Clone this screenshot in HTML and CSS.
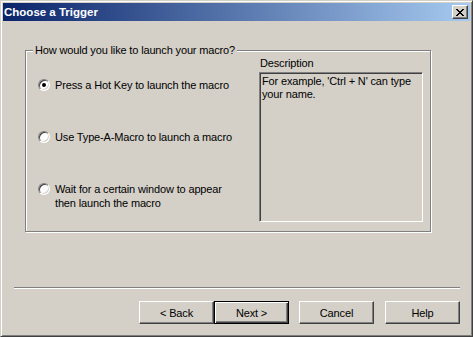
FILE: index.html
```html
<!DOCTYPE html>
<html lang="en">
<head>
    <meta charset="UTF-8">
    <title>Choose a Trigger</title>
    <link rel="stylesheet" href="styles.css">
</head>
<body>
    <div class="window">
        <div class="titlebar">
            <span class="title">Choose a Trigger</span>
            <span class="close">
                <svg width="8" height="7" viewBox="0 0 8 7" shape-rendering="crispEdges">
                    <rect x="0" y="0" width="2" height="1"/><rect x="6" y="0" width="2" height="1"/>
                    <rect x="1" y="1" width="2" height="1"/><rect x="5" y="1" width="2" height="1"/>
                    <rect x="2" y="2" width="4" height="1"/>
                    <rect x="3" y="3" width="2" height="1"/>
                    <rect x="2" y="4" width="4" height="1"/>
                    <rect x="1" y="5" width="2" height="1"/><rect x="5" y="5" width="2" height="1"/>
                    <rect x="0" y="6" width="2" height="1"/><rect x="6" y="6" width="2" height="1"/>
                </svg>
            </span>
        </div>
        <div class="panel">
            <div class="group">
                <span class="group-label">How would you like to launch your macro?</span>
                <div class="options">
                    <div class="option">
                        <span class="radio checked"></span>
                        <span class="option-text">Press a Hot Key to launch the macro</span>
                    </div>
                    <div class="option">
                        <span class="radio"></span>
                        <span class="option-text">Use Type-A-Macro to launch a macro</span>
                    </div>
                    <div class="option">
                        <span class="radio"></span>
                        <span class="option-text">Wait for a certain window to appear<br>then launch the macro</span>
                    </div>
                </div>
                <div class="desc">
                    <div class="desc-label">Description</div>
                    <div class="desc-box">For example, 'Ctrl + N' can type<br>your name.</div>
                </div>
            </div>
            <div class="separator"></div>
            <div class="buttons">
                <button class="btn">&lt; Back</button>
                <button class="btn default">Next &gt;</button>
                <button class="btn cancel">Cancel</button>
                <button class="btn help">Help</button>
            </div>
        </div>
    </div>
</body>
</html>
```

FILE: styles.css
```css
body {
    margin: 0;
    background: #d4d0c8;
    font-family: "Liberation Sans", Arial, sans-serif;
    font-size: 11px;
    letter-spacing: -0.15px;
    color: #000;
}
.window {
    width: 473px;
    height: 337px;
    box-sizing: border-box;
    border: 1px solid;
    border-color: #d4d0c8 #404040 #404040 #d4d0c8;
    box-shadow: inset 1px 1px #fff, inset -1px -1px #808080;
    padding: 2px;
    background: #d4d0c8;
    display: flex;
    flex-direction: column;
}
.titlebar {
    height: 18px;
    flex-shrink: 0;
    background: linear-gradient(to right, #0a246a, #a6caf0);
    display: flex;
    align-items: center;
    justify-content: space-between;
    padding: 0 2px 0 1px;
}
.title {
    color: #fff;
    font-weight: bold;
    font-size: 11.5px;
    letter-spacing: 0;
}
.close {
    width: 16px;
    height: 14px;
    box-sizing: border-box;
    background: #d4d0c8;
    border: 1px solid;
    border-color: #fff #404040 #404040 #fff;
    box-shadow: inset -1px -1px #808080;
    display: flex;
    justify-content: center;
    align-items: center;
    padding-right: 1px;
}
.panel {
    flex: 1;
    padding: 0 10px 0 11px;
    display: flex;
    flex-direction: column;
}
.group {
    position: relative;
    margin: 29px 0 0 11px;
    width: 406px;
    height: 182px;
    box-sizing: border-box;
    border: 1px solid #808080;
    box-shadow: 1px 1px 0 #fff, inset 1px 1px 0 #fff;
    display: flex;
    padding: 0 7px 0 12px;
}
.group-label {
    position: absolute;
    top: -7px;
    left: 7px;
    padding: 0 2px;
    background: #d4d0c8;
    line-height: 13px;
}
.options {
    flex: 1;
    padding-top: 27px;
}
.option {
    display: flex;
    align-items: flex-start;
    min-height: 52px;
    line-height: 14px;
}
.radio {
    position: relative;
    width: 12px;
    height: 12px;
    box-sizing: border-box;
    margin-top: 1px;
    margin-right: 5px;
    border-radius: 50%;
    background: #fff;
    border: 1px solid;
    border-color: #808080 #fff #fff #808080;
    box-shadow: inset 1px 1px #404040, inset -1px -1px #d4d0c8;
    flex-shrink: 0;
}
.radio.checked::after {
    content: "";
    position: absolute;
    left: 3px;
    top: 3px;
    width: 4px;
    height: 4px;
    border-radius: 50%;
    background: #000;
}
.desc {
    width: 164px;
    padding-top: 6px;
}
.desc-label {
    line-height: 13px;
    margin: 0 0 2px 1px;
}
.desc-box {
    height: 150px;
    box-sizing: border-box;
    border: 1px solid;
    border-color: #808080 #fff #fff #808080;
    box-shadow: inset 1px 1px #404040, inset -1px -1px #d4d0c8;
    padding: 2px 2px 0 2px;
    line-height: 13px;
}
.separator {
    margin-top: 55px;
    border-top: 1px solid #808080;
    border-bottom: 1px solid #fff;
}
.buttons {
    margin-top: 12px;
    display: flex;
    justify-content: flex-end;
}
.btn {
    width: 75px;
    height: 23px;
    box-sizing: border-box;
    margin: 0;
    padding: 0;
    background: #d4d0c8;
    border: 1px solid;
    border-color: #fff #404040 #404040 #fff;
    box-shadow: inset -1px -1px #808080;
    font-family: inherit;
    font-size: 11px;
    letter-spacing: -0.15px;
    color: #000;
}
.btn.default {
    border-color: #000;
    box-shadow: inset 1px 1px #fff, inset -1px -1px #404040, inset -2px -2px #808080;
}
.btn.cancel {
    margin-left: 10px;
}
.btn.help {
    margin-left: 11px;
}
```
